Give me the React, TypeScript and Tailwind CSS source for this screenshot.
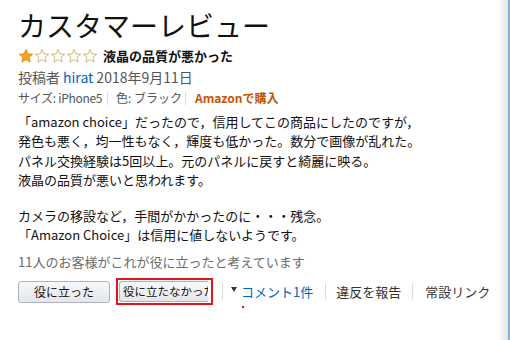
const FONT = { fontFamily: '"Noto Sans CJK JP", "Noto Sans", sans-serif' };

function Star({ filled }: { filled: boolean }) {
  return (
    <svg width="16" height="16" viewBox="0 0 24 24">
      <path
        d="M12 2.2l2.9 6.6 7.1.6-5.4 4.7 1.6 7-6.2-3.7-6.2 3.7 1.6-7L2 9.4l7.1-.6z"
        fill={filled ? "#f3a619" : "#ffffff"}
        stroke={filled ? "#d98b0b" : "#c9a866"}
        strokeWidth="1.3"
        strokeLinejoin="round"
      />
    </svg>
  );
}

function Sep({ h = "h-[17px]" }: { h?: string }) {
  return <span className={`block w-px ${h} bg-[#dddddd]`} />;
}

export default function App() {
  return (
    <div className="w-[510px] h-[340px] flex bg-white overflow-hidden text-[#111]" style={FONT}>
      <div className="flex-1 pl-[18px] pt-[8px]">
        <h1 className="text-[28px] leading-[34px] font-normal text-[#111]">カスタマーレビュー</h1>

        <div className="mt-[4px] h-[20px] flex items-center">
          <div className="flex">
            <Star filled />
            <Star filled={false} />
            <Star filled={false} />
            <Star filled={false} />
            <Star filled={false} />
          </div>
          <span className="ml-[5px] text-[13px] font-bold">液晶の品質が悪かった</span>
        </div>

        <div className="mt-[1px] h-[20px] flex items-center text-[14px] text-[#555]">
          <span>投稿者</span>
          <span className="ml-[3px] text-[#0066c0]">hirat</span>
          <span className="ml-[3px]">2018年9月11日</span>
        </div>

        <div className="mt-[2px] h-[18px] flex items-center text-[12px] text-[#555] whitespace-nowrap">
          <span className="w-[81px] tracking-[-0.3px]">サイズ: iPhone5</span>
          <span className="ml-[8px]"><Sep h="h-[13px]" /></span>
          <span className="ml-[8px] w-[61px]">色: ブラック</span>
          <span className="ml-[8px]"><Sep h="h-[13px]" /></span>
          <span className="ml-[9px] font-bold text-[#c45500]">Amazonで購入</span>
        </div>

        <div className="mt-[5px] text-[13px] leading-[19.4px] text-[#111]">
          <p>「amazon choice」だったので，信用してこの商品にしたのですが，</p>
          <p>発色も悪く，均一性もなく，輝度も低かった。数分で画像が乱れた。</p>
          <p>パネル交換経験は5回以上。元のパネルに戻すと綺麗に映る。</p>
          <p>液晶の品質が悪いと思われます。</p>
          <p className="mt-[16px]">カメラの移設など，手間がかかったのに・・・残念。</p>
          <p>「Amazon Choice」は信用に値しないようです。</p>
        </div>

        <div className="mt-[7px] h-[20px] flex items-center text-[13px] text-[#6b6b6b]">
          11人のお客様がこれが役に立ったと考えています
        </div>

        <div className="mt-[7px] h-[27px] flex items-center text-[13px]">
          <button className="w-[92px] h-[22px] rounded-[3px] border border-[#adb1b8] bg-gradient-to-b from-[#f7f8fa] to-[#e4e6ea] text-[12px] text-[#111] flex items-center justify-center">
            役に立った
          </button>
          <div className="ml-[6px] w-[97px] h-[27px] border-2 border-[#e3141b] pt-[1px] pl-[1px]">
            <div className="w-[89px] h-[21px] rounded-l-[3px] border border-r-0 border-[#adb1b8] bg-gradient-to-b from-[#f7f8fa] to-[#e4e6ea] text-[11.5px] text-[#111] overflow-hidden whitespace-nowrap pl-[3px] leading-[19px]">
              役に立たなかった
            </div>
          </div>
          <span className="ml-[9px]"><Sep /></span>
          <span className="ml-[8px] w-0 h-0 border-l-[3.5px] border-r-[3.5px] border-t-[5px] border-l-transparent border-r-transparent border-t-[#333] mb-[4px]" />
          <span className="relative ml-[4px] text-[#0066c0]">
            コメント1件
            <span className="absolute left-[1px] top-[24px] w-[2px] h-[2px] bg-[#e3141b]" />
          </span>
          <span className="ml-[12px]"><Sep /></span>
          <span className="ml-[10px] text-[#333]">違反を報告</span>
          <span className="ml-[11px]"><Sep /></span>
          <span className="ml-[12px] text-[#333]">常設リンク</span>
        </div>
      </div>
      <div className="w-[12px] h-full bg-gradient-to-r from-white to-[#e2e2e2] border-r-2 border-[#8eaad8]" />
    </div>
  );
}
